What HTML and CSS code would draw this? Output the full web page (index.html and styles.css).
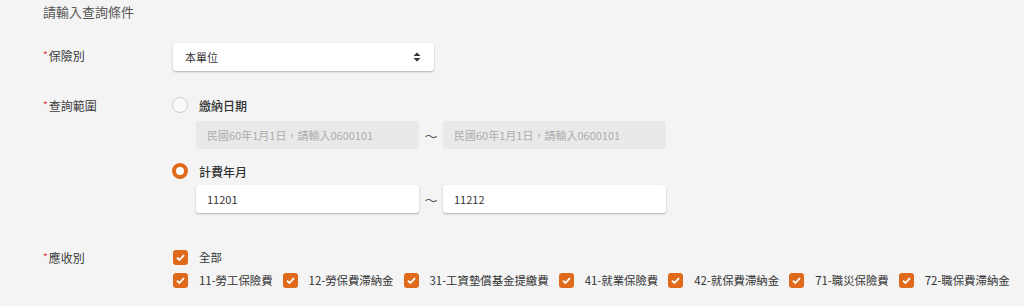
FILE: index.html
```html
<!DOCTYPE html>
<html lang="zh-Hant">
<head>
<meta charset="utf-8">
<title>查詢條件</title>
<link rel="stylesheet" href="styles.css">
</head>
<body>
<div class="page">
  <div class="title">請輸入查詢條件</div>

  <div class="row row-ins">
    <div class="label"><span class="req">*</span>保險別</div>
    <div class="field">
      <div class="select">
        <span>本單位</span>
        <svg class="updown" width="8" height="10" viewBox="0 0 8 10"><path d="M4 0.5L7.5 4H0.5z M4 9.5L0.5 6H7.5z" fill="#333"/></svg>
      </div>
    </div>
  </div>

  <div class="row row-range">
    <div class="label"><span class="req">*</span>查詢範圍</div>
    <div class="field">
      <div class="radio-line">
        <span class="radio"></span>
        <span class="radio-text">繳納日期</span>
      </div>
      <div class="input-pair first-pair">
        <div class="input disabled">民國60年1月1日，請輸入0600101</div>
        <span class="tilde">～</span>
        <div class="input disabled">民國60年1月1日，請輸入0600101</div>
      </div>
      <div class="radio-line second-radio">
        <span class="radio checked"></span>
        <span class="radio-text">計費年月</span>
      </div>
      <div class="input-pair second-pair">
        <div class="input">11201</div>
        <span class="tilde">～</span>
        <div class="input">11212</div>
      </div>
    </div>
  </div>

  <div class="row row-type">
    <div class="label"><span class="req">*</span>應收別</div>
    <div class="field">
      <div class="check-line">
        <span class="check-item"><span class="box"><svg width="9" height="7" viewBox="0 0 9 7"><path d="M1 3.6L3.4 6L8 1.2" fill="none" stroke="#fff" stroke-width="1.8"/></svg></span><span class="ctext">全部</span></span>
      </div>
      <div class="check-line items">
        <span class="check-item"><span class="box"><svg width="9" height="7" viewBox="0 0 9 7"><path d="M1 3.6L3.4 6L8 1.2" fill="none" stroke="#fff" stroke-width="1.8"/></svg></span><span class="ctext">11-勞工保險費</span></span>
        <span class="check-item"><span class="box"><svg width="9" height="7" viewBox="0 0 9 7"><path d="M1 3.6L3.4 6L8 1.2" fill="none" stroke="#fff" stroke-width="1.8"/></svg></span><span class="ctext">12-勞保費滯納金</span></span>
        <span class="check-item"><span class="box"><svg width="9" height="7" viewBox="0 0 9 7"><path d="M1 3.6L3.4 6L8 1.2" fill="none" stroke="#fff" stroke-width="1.8"/></svg></span><span class="ctext">31-工資墊償基金提繳費</span></span>
        <span class="check-item"><span class="box"><svg width="9" height="7" viewBox="0 0 9 7"><path d="M1 3.6L3.4 6L8 1.2" fill="none" stroke="#fff" stroke-width="1.8"/></svg></span><span class="ctext">41-就業保險費</span></span>
        <span class="check-item"><span class="box"><svg width="9" height="7" viewBox="0 0 9 7"><path d="M1 3.6L3.4 6L8 1.2" fill="none" stroke="#fff" stroke-width="1.8"/></svg></span><span class="ctext">42-就保費滯納金</span></span>
        <span class="check-item"><span class="box"><svg width="9" height="7" viewBox="0 0 9 7"><path d="M1 3.6L3.4 6L8 1.2" fill="none" stroke="#fff" stroke-width="1.8"/></svg></span><span class="ctext">71-職災保險費</span></span>
        <span class="check-item"><span class="box"><svg width="9" height="7" viewBox="0 0 9 7"><path d="M1 3.6L3.4 6L8 1.2" fill="none" stroke="#fff" stroke-width="1.8"/></svg></span><span class="ctext">72-職保費滯納金</span></span>
      </div>
    </div>
  </div>
</div>
</body>
</html>
```

FILE: styles.css
```css
* { box-sizing: border-box; }
html, body {
  margin: 0;
  padding: 0;
  background: #f4f4f4;
}
body {
  font-family: "Noto Sans CJK TC", "Noto Sans", sans-serif;
  color: #444;
  font-size: 12px;
  overflow: hidden;
}
.page {
  padding: 3px 0 0 43px;
}
.title {
  font-size: 13px;
  line-height: 18px;
  color: #555;
  height: 18px;
}
.row {
  display: grid;
  grid-template-columns: 130px 1fr;
}
.label {
  font-size: 12px;
  line-height: 20px;
  color: #3a3a3a;
}
.req {
  color: #d9332b;
  font-size: 10px;
  vertical-align: 2px;
  margin-right: 1px;
}
.row-ins {
  margin-top: 22px;
}
.row-ins .label {
  padding-top: 2px;
}
.select {
  width: 261px;
  height: 28px;
  background: #fff;
  border-radius: 3px;
  box-shadow: 0 1px 2px rgba(0,0,0,0.28);
  display: flex;
  align-items: center;
  justify-content: space-between;
  padding: 0 13px 0 12px;
  font-size: 11px;
  color: #333;
}
.row-range {
  margin-top: 24px;
}
.radio-line {
  display: flex;
  align-items: center;
  height: 20px;
}
.radio {
  width: 16px;
  height: 16px;
  border-radius: 50%;
  border: 1.5px solid #cfcfcf;
  background: #fafafa;
  margin-left: -1px;
}
.radio.checked {
  border: 4.5px solid #e06a1c;
  background: #fff;
}
.radio-text {
  margin-left: 11px;
  font-size: 12px;
  font-weight: 500;
  color: #333;
}
.second-radio {
  margin-top: 12px;
}
.input-pair {
  display: flex;
  align-items: center;
  margin-left: 23px;
}
.first-pair { margin-top: 6px; }
.second-pair { margin-top: 4px; }
.input {
  width: 223px;
  height: 28px;
  border-radius: 3px;
  background: #fff;
  box-shadow: 0 1px 2px rgba(0,0,0,0.28);
  font-size: 11px;
  line-height: 28px;
  padding-left: 11px;
  color: #333;
}
.input.disabled {
  background: #e9e9e9;
  box-shadow: none;
  color: #adadad;
}
.tilde {
  width: 24px;
  text-align: center;
  font-size: 13px;
  color: #555;
}
.row-type {
  margin-top: 34px;
}
.check-line {
  display: flex;
  align-items: center;
  height: 20px;
}
.check-line.items {
  margin-top: 3px;
}
.check-item {
  display: flex;
  align-items: center;
  margin-right: 10px;
}
.box {
  width: 15px;
  height: 15px;
  border-radius: 3px;
  background: #e06a1c;
  display: flex;
  align-items: center;
  justify-content: center;
}
.ctext {
  margin-left: 11px;
  font-size: 11.4px;
  color: #333;
  white-space: nowrap;
}
```
